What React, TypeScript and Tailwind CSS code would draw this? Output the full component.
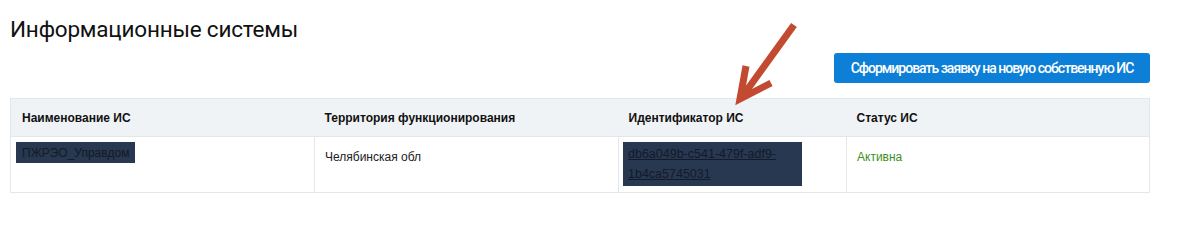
export default function App() {
  const cols = ["Наименование ИС", "Территория функционирования", "Идентификатор ИС", "Статус ИС"];

  return (
    <div className="relative min-h-[229px] w-[1182px] bg-white font-['Liberation_Sans',Arial,sans-serif] text-[#222]">
      <div className="flex w-[1150px] flex-col pl-[10px]">
        <h1 className="mt-[16px] font-['Roboto',sans-serif] text-[22.5px] leading-[27px] font-normal tracking-[-0.2px] text-[#111]">
          Информационные системы
        </h1>

        <div className="mt-[10px] flex justify-end">
          <button className="h-[30px] w-[316px] rounded-[3px] bg-[#0e7fd7] font-['Roboto',sans-serif] text-[14px] font-medium tracking-[-1px] text-white">
            Сформировать заявку на новую собственную ИС
          </button>
        </div>

        <table className="mt-[15px] w-[1140px] table-fixed border-collapse border border-[#e3e7eb] text-[12px]">
          <colgroup>
            <col className="w-[304px]" />
            <col className="w-[304px]" />
            <col className="w-[228px]" />
            <col />
          </colgroup>
          <thead>
            <tr className="h-[38px] bg-[#f0f3f6]">
              {cols.map((c) => (
                <th key={c} className="px-[10px] text-left font-bold text-[#111] first:pl-[11px]">
                  {c}
                </th>
              ))}
            </tr>
          </thead>
          <tbody>
            <tr className="h-[56px] border-t border-[#e3e7eb] align-top">
              <td className="pt-[5px] pl-[5px]">
                <div className="h-[21px] w-[119px] bg-[#273850] pt-[3px] pl-[6px] leading-[16px] text-[#141a26]">
                  ПЖРЭО_Управдом
                </div>
              </td>
              <td className="border-l border-[#e3e7eb] px-[10px] pt-[10px] leading-[20px]">Челябинская обл</td>
              <td className="border-l border-[#e3e7eb] pt-[5px] pl-[4px]">
                <div className="h-[44px] w-[179px] bg-[#273850] pt-[2px] pl-[5px] text-[12.5px] leading-[20px]">
                  <a href="#" className="text-[#131a2b] underline">
                    db6a049b-c541-479f-adf9-
                    <br />
                    1b4ca5745031
                  </a>
                </div>
              </td>
              <td className="border-l border-[#e3e7eb] px-[10px] pt-[10px] leading-[20px] text-[#3f8f26]">Активна</td>
            </tr>
          </tbody>
        </table>
      </div>

      <svg className="pointer-events-none absolute top-0 left-0" width="1182" height="229" viewBox="0 0 1182 229">
        <g stroke="#c24a31" strokeWidth="7" fill="none" strokeLinecap="butt" strokeLinejoin="miter">
          <line x1="794" y1="25" x2="742" y2="97" />
          <polyline points="746,66 740,99 771,83" />
        </g>
      </svg>
    </div>
  );
}
